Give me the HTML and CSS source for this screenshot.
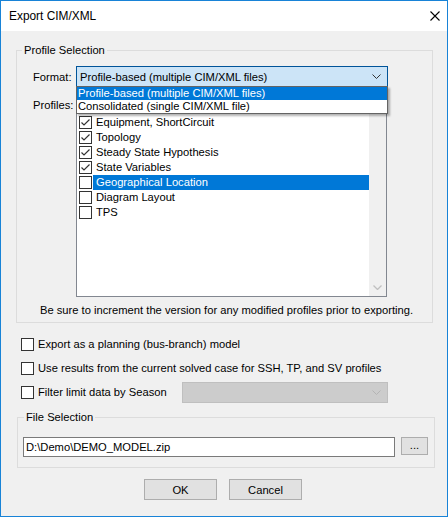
FILE: index.html
```html
<!DOCTYPE html>
<html>
<head>
<meta charset="utf-8">
<link rel="stylesheet" href="styles.css">
</head>
<body>
<div class="window">
  <div class="titlebar">
    <span class="title">Export CIM/XML</span>
    <svg class="close" width="10" height="10" viewBox="0 0 10 10"><path d="M0.5 0.5 L9.5 9.5 M9.5 0.5 L0.5 9.5" stroke="#000" stroke-width="1.1" fill="none"/></svg>
  </div>
  <div class="body">
    <fieldset class="group profile-group">
      <legend>Profile Selection</legend>
      <div class="group-body">
        <div class="format-row">
          <span class="field-label">Format:</span>
          <div class="combo active">
            <span class="combo-text">Profile-based (multiple CIM/XML files)</span>
            <svg class="chev" width="9" height="5" viewBox="0 0 9 5"><polyline points="0.5,0.5 4.5,4.5 8.5,0.5" fill="none" stroke="#333" stroke-width="1"/></svg>
            <ul class="dropdown">
              <li class="selected">Profile-based (multiple CIM/XML files)</li>
              <li>Consolidated (single CIM/XML file)</li>
            </ul>
          </div>
        </div>
        <div class="profiles-row">
          <span class="field-label profiles-label">Profiles:</span>
          <div class="listbox">
            <ul class="items">
              <li class="item"><span class="cb"></span><span class="item-label"></span></li>
              <li class="item"><span class="cb"><svg width="11" height="11" viewBox="0 0 11 11"><polyline points="1.5,5.5 4,8 9.5,2.5" fill="none" stroke="#333" stroke-width="1.2"/></svg></span><span class="item-label">Equipment, ShortCircuit</span></li>
              <li class="item"><span class="cb"><svg width="11" height="11" viewBox="0 0 11 11"><polyline points="1.5,5.5 4,8 9.5,2.5" fill="none" stroke="#333" stroke-width="1.2"/></svg></span><span class="item-label">Topology</span></li>
              <li class="item"><span class="cb"><svg width="11" height="11" viewBox="0 0 11 11"><polyline points="1.5,5.5 4,8 9.5,2.5" fill="none" stroke="#333" stroke-width="1.2"/></svg></span><span class="item-label">Steady State Hypothesis</span></li>
              <li class="item"><span class="cb"><svg width="11" height="11" viewBox="0 0 11 11"><polyline points="1.5,5.5 4,8 9.5,2.5" fill="none" stroke="#333" stroke-width="1.2"/></svg></span><span class="item-label">State Variables</span></li>
              <li class="item highlighted"><span class="cb"></span><span class="item-label">Geographical Location</span></li>
              <li class="item"><span class="cb"></span><span class="item-label">Diagram Layout</span></li>
              <li class="item"><span class="cb"></span><span class="item-label">TPS</span></li>
            </ul>
            <div class="vscroll">
              <span class="sarrow"><svg width="9" height="5" viewBox="0 0 9 5"><polyline points="0.5,4.5 4.5,0.5 8.5,4.5" fill="none" stroke="#c0c0c0" stroke-width="1.3"/></svg></span>
              <span class="sarrow"><svg width="9" height="5" viewBox="0 0 9 5"><polyline points="0.5,0.5 4.5,4.5 8.5,0.5" fill="none" stroke="#c0c0c0" stroke-width="1.3"/></svg></span>
            </div>
          </div>
        </div>
        <p class="note">Be sure to increment the version for any modified profiles prior to exporting.</p>
      </div>
    </fieldset>

    <div class="options">
      <div class="opt"><span class="cb"></span><span>Export as a planning (bus-branch) model</span></div>
      <div class="opt"><span class="cb"></span><span>Use results from the current solved case for SSH, TP, and SV profiles</span></div>
      <div class="opt"><span class="cb"></span><span class="season-label">Filter limit data by Season</span>
        <div class="combo disabled">
          <span class="combo-text"></span>
          <svg class="chev" width="9" height="5" viewBox="0 0 9 5"><polyline points="0.5,0.5 4.5,4.5 8.5,0.5" fill="none" stroke="#b4b4b4" stroke-width="1"/></svg>
        </div>
      </div>
    </div>

    <fieldset class="group file-group">
      <legend>File Selection</legend>
      <div class="file-body">
        <div class="textbox">D:\Demo\DEMO_MODEL.zip</div>
        <div class="btn browse">...</div>
      </div>
    </fieldset>

    <div class="buttons">
      <div class="btn action">OK</div>
      <div class="btn action">Cancel</div>
    </div>
  </div>
</div>
</body>
</html>
```

FILE: styles.css
```css
* { box-sizing: border-box; }
body {
  margin: 0;
  font-family: "Liberation Sans", Arial, sans-serif;
  font-size: 11.2px;
  color: #000;
}
.window {
  width: 448px;
  height: 517px;
  border: 1px solid #1883d7;
  background: #f0f0f0;
  display: flex;
  flex-direction: column;
}
.titlebar {
  height: 30px;
  flex: none;
  background: #fff;
  display: flex;
  align-items: center;
  justify-content: space-between;
  padding-left: 8px;
  padding-right: 7px;
  font-size: 11.9px;
}
.close { display: block; }
.body {
  padding-top: 12px;
  display: flex;
  flex-direction: column;
}
fieldset.group {
  margin: 0;
  padding: 0;
  border: 1px solid #dcdcdc;
  min-width: 0;
}
fieldset.group legend {
  padding: 0 2px;
  line-height: 15px;
  height: 15px;
}
.profile-group {
  margin-left: 15px !important;
  width: 417px;
}
.profile-group legend { margin-left: 5px; }
.group-body {
  padding: 8px 16px 4px 16px;
}
.format-row {
  display: flex;
  align-items: center;
  height: 21px;
}
.field-label {
  width: 43px;
  flex: none;
}
.combo {
  position: relative;
  width: 312px;
  height: 21px;
  display: flex;
  align-items: center;
  justify-content: space-between;
  padding: 0 6px 0 3px;
}
.combo.active {
  background: #cce4f7;
  border: 1px solid #005499;
}
.combo.disabled {
  background: #cccccc;
  border: 1px solid #bfbfbf;
  width: 206px;
}
.chev { display: block; flex: none; }
.dropdown {
  position: absolute;
  top: 19px;
  left: -1px;
  width: 312px;
  margin: 0;
  padding: 0;
  list-style: none;
  background: #fff;
  border: 1px solid #646464;
  box-shadow: 2px 2px 2px rgba(0, 0, 0, 0.3);
  z-index: 5;
}
.dropdown li {
  height: 13px;
  line-height: 13px;
  padding-left: 1px;
  white-space: nowrap;
}
.dropdown li.selected {
  background: #0078d7;
  color: #fff;
}
.profiles-row {
  display: flex;
  align-items: flex-start;
  margin-top: 12px;
}
.profiles-label {
  line-height: 15px;
  margin-top: -1px;
}
.listbox {
  width: 311px;
  height: 198px;
  border: 1px solid #828790;
  background: #fff;
  display: flex;
}
.items {
  flex: 1;
  margin: 0;
  padding: 0;
  list-style: none;
}
.item {
  display: flex;
  align-items: center;
  height: 15px;
  padding-left: 2px;
}
.cb {
  width: 13px;
  height: 13px;
  flex: none;
  border: 1px solid #333;
  background: #fff;
  display: flex;
  align-items: center;
  justify-content: center;
}
.cb svg { display: block; }
.item-label {
  flex: 1;
  height: 15px;
  line-height: 15px;
  margin-left: 1px;
  padding-left: 3px;
}
.item.highlighted .item-label {
  background: #0078d7;
  color: #fff;
}
.vscroll {
  width: 17px;
  flex: none;
  background: #f0f0f0;
  display: flex;
  flex-direction: column;
  justify-content: space-between;
}
.sarrow {
  height: 17px;
  display: flex;
  align-items: center;
  justify-content: center;
}
.note {
  margin: 6px 0 0 0;
  padding-left: 4px;
  line-height: 15px;
  text-align: center;
}
.options {
  margin-top: 9px;
  display: flex;
  flex-direction: column;
}
.opt {
  display: flex;
  align-items: center;
  height: 24px;
  padding-left: 20px;
}
.opt .cb { margin-right: 4px; }
.season-label {
  width: 144px;
  flex: none;
}
.file-group {
  margin-top: 6px !important;
  margin-left: 16px !important;
  width: 418px;
}
.file-group legend { margin-left: 6px; }
.file-body {
  display: flex;
  align-items: flex-start;
  padding: 12px 6px 10px 5px;
}
.textbox {
  width: 372px;
  height: 20px;
  border: 1px solid #7a7a7a;
  background: #fff;
  line-height: 18px;
  padding-left: 2px;
}
.btn {
  background: #e1e1e1;
  border: 1px solid #adadad;
  display: flex;
  align-items: center;
  justify-content: center;
}
.browse {
  width: 27px;
  height: 18px;
  margin-left: 6px;
  padding-bottom: 2px;
}
.buttons {
  margin-top: 11px;
  display: flex;
  justify-content: center;
  gap: 12px;
  padding-right: 2px;
}
.action {
  width: 73px;
  height: 21px;
}
```
